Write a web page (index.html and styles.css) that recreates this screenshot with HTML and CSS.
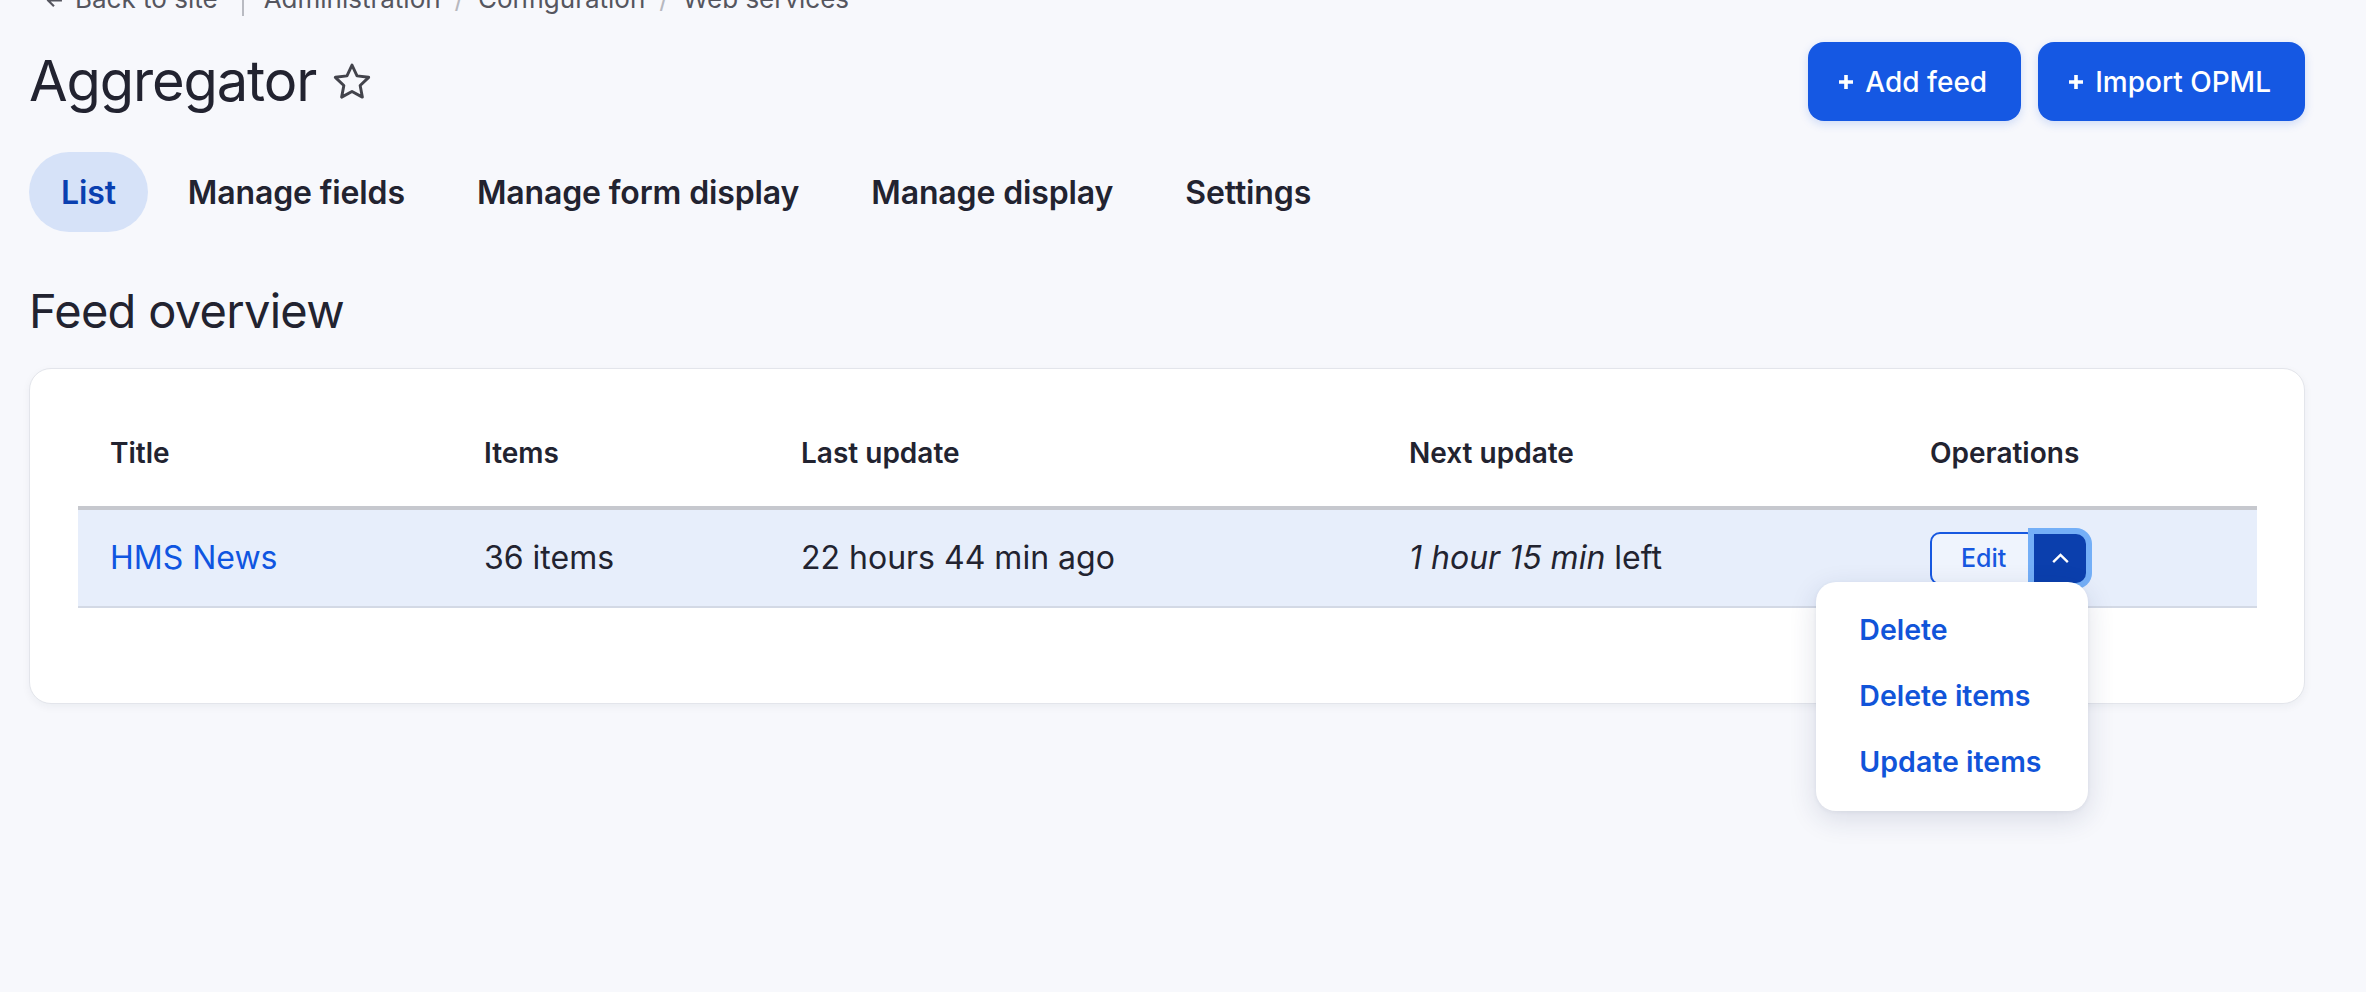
FILE: index.html
```html
<!DOCTYPE html>
<html lang="en">
<head>
    <meta charset="UTF-8">
    <meta name="viewport" content="width=device-width, initial-scale=1.0">
    <title>Aggregator | Web services</title>
    <link rel="stylesheet" href="styles.css">
</head>
<body>
    <nav class="breadcrumb">
        <a class="back" href="#">
            <svg class="back-icon" viewBox="0 0 16 16" width="17" height="17"><path d="M15 8H2M7.5 2.5 2 8l5.5 5.5" fill="none" stroke="#55565f" stroke-width="2"/></svg>
            Back to site
        </a>
        <ol class="trail">
            <li><a href="#">Administration</a></li>
            <li><a href="#">Configuration</a></li>
            <li><a href="#">Web services</a></li>
        </ol>
    </nav>
    <main class="page">
        <header class="page-header">
            <h1 class="page-title">Aggregator
                <button class="shortcut" title="Add to Default shortcuts">
                    <svg viewBox="0 0 24 24" width="44" height="44"><path d="M12 2.8l2.75 5.85 6.35.8-4.65 4.45 1.2 6.35L12 17.15l-5.65 3.1 1.2-6.35L2.9 9.45l6.35-.8z" fill="none" stroke="#43444c" stroke-width="1.6" stroke-linejoin="round"/></svg>
                </button>
            </h1>
            <div class="actions">
                <a class="button" href="#"><svg class="plus" viewBox="0 0 14 14" width="14" height="14"><path d="M7 0v14M0 7h14" stroke="#fff" stroke-width="3.6"/></svg>Add feed</a>
                <a class="button" href="#"><svg class="plus" viewBox="0 0 14 14" width="14" height="14"><path d="M7 0v14M0 7h14" stroke="#fff" stroke-width="3.6"/></svg>Import OPML</a>
            </div>
        </header>

        <nav class="tabs">
            <a class="tab is-active" href="#">List</a>
            <a class="tab" href="#">Manage fields</a>
            <a class="tab" href="#">Manage form display</a>
            <a class="tab" href="#">Manage display</a>
            <a class="tab" href="#">Settings</a>
        </nav>

        <h2 class="section-title">Feed overview</h2>

        <div class="card">
            <table class="feeds">
                <colgroup>
                    <col style="width: 374px">
                    <col style="width: 317px">
                    <col style="width: 608px">
                    <col style="width: 521px">
                    <col>
                </colgroup>
                <thead>
                    <tr>
                        <th>Title</th>
                        <th>Items</th>
                        <th>Last update</th>
                        <th>Next update</th>
                        <th>Operations</th>
                    </tr>
                </thead>
                <tbody>
                    <tr>
                        <td><a class="feed-link" href="#">HMS News</a></td>
                        <td>36 items</td>
                        <td>22 hours 44 min ago</td>
                        <td><em>1 hour 15 min</em> left</td>
                        <td class="ops">
                            <div class="ops-wrap">
                                <div class="dropbutton">
                                    <a class="edit-btn" href="#">Edit</a>
                                    <button class="toggle" aria-expanded="true">
                                        <svg viewBox="0 0 20 12" width="19" height="11"><path d="M2 10l8-8 8 8" fill="none" stroke="#fff" stroke-width="2.6"/></svg>
                                    </button>
                                    <ul class="menu">
                                        <li><a href="#">Delete</a></li>
                                        <li><a href="#">Delete items</a></li>
                                        <li><a href="#">Update items</a></li>
                                    </ul>
                                </div>
                            </div>
                        </td>
                    </tr>
                </tbody>
            </table>
        </div>
    </main>
</body>
</html>
```

FILE: styles.css
```css
html { background: #f7f8fc; }
body { margin: 0; min-height: 1010px; font-family: Inter, 'Noto Sans', Arial, sans-serif; font-size: 32px; color: #222330; background: #f7f8fc; }
a { text-decoration: none; color: inherit; }

/* breadcrumb, cut off at the top edge */
.breadcrumb { display: flex; height: 30px; margin-top: -14px; font-size: 26px; line-height: 26px; color: #55565f; }
.back { display: flex; align-items: flex-start; gap: 12px; padding: 0 24px 0 46px; border-right: 2px solid #b9bbc2; }
.back-icon { margin-top: 6px; }
.trail { display: flex; margin: 0; padding: 0 0 0 20px; list-style: none; }
.trail li + li::before { content: "/"; color: #b7b8bf; margin: 0 14px; }

.page { padding: 0 61px 0 29px; }

.page-header { display: flex; justify-content: space-between; align-items: center; height: 79px; margin-top: 26px; }
.page-title { display: flex; align-items: center; gap: 14px; margin: 0; font-size: 56px; font-weight: 400; line-height: 67px; letter-spacing: -0.02em; }
.shortcut { display: flex; padding: 0; border: none; background: none; cursor: pointer; margin-top: 1px; }
.actions { display: flex; gap: 17px; }
.button { display: flex; align-items: center; height: 79px; box-sizing: border-box; padding: 0 34px 0 31px; background: #1558e3; color: #fff; border-radius: 16px; font-size: 28px; font-weight: 500; box-shadow: 0 3px 10px rgba(21, 88, 227, 0.18); }
.plus { margin-right: 12px; }

.tabs { display: flex; gap: 8px; margin-top: 31px; }
.tab { display: flex; align-items: center; height: 80px; padding: 0 32px; border-radius: 40px; font-size: 32px; font-weight: 600; letter-spacing: -0.004em; color: #222330; }
.tab.is-active { background: #d6e2f8; color: #0a3fb0; }

.section-title { margin: 49px 0 27px; font-size: 47px; font-weight: 400; line-height: 60px; letter-spacing: -0.015em; }

.card { background: #fff; border: 1px solid #e3e5eb; border-radius: 22px; padding: 31px 47px 95px 48px; box-shadow: 0 3px 8px rgba(20, 30, 60, 0.05); }
.feeds { width: 100%; table-layout: fixed; border-collapse: separate; border-spacing: 0; }
.feeds th { padding: 32px; font-size: 28px; font-weight: 600; line-height: 42px; text-align: left; border-bottom: 4px solid #c6c8ce; }
.feeds td { padding: 24px 32px; line-height: 48px; background: #e7eefb; border-bottom: 2px solid #d3d9e5; white-space: nowrap; }
.feed-link { color: #0f55e1; }
.feeds td.ops { padding: 20px 32px; }
.ops-wrap { display: flex; align-items: center; height: 56px; }

/* dropbutton, shown open */
.dropbutton { display: flex; align-items: center; position: relative; height: 53px; }
.edit-btn { height: 53px; box-sizing: border-box; padding: 0 29px; border: 2px solid #1758e0; border-radius: 10px; background: #eff4fd; color: #1758e0; font-size: 25px; font-weight: 500; line-height: 49px; }
.toggle { display: flex; align-items: center; justify-content: center; width: 52px; height: 49px; margin-left: -3px; padding: 0; border: none; border-radius: 0 10px 10px 0; background: #0b3fad; box-shadow: 0 0 0 6px #74aff7; cursor: pointer; }
.menu {
    position: absolute;
    top: calc(100% - 3px);
    right: -2px;
    width: 272px;
    box-sizing: border-box;
    margin: 0;
    padding: 15px 0 16px;
    list-style: none;
    background: #fff;
    border-radius: 20px;
    box-shadow: 0 8px 28px rgba(30, 45, 90, 0.14), 0 1px 4px rgba(30, 45, 90, 0.06);
    z-index: 10;
}
.menu a { display: block; padding: 12px 20px 12px 43px; font-size: 28.5px; font-weight: 600; line-height: 42px; color: #1154d9; }
```
